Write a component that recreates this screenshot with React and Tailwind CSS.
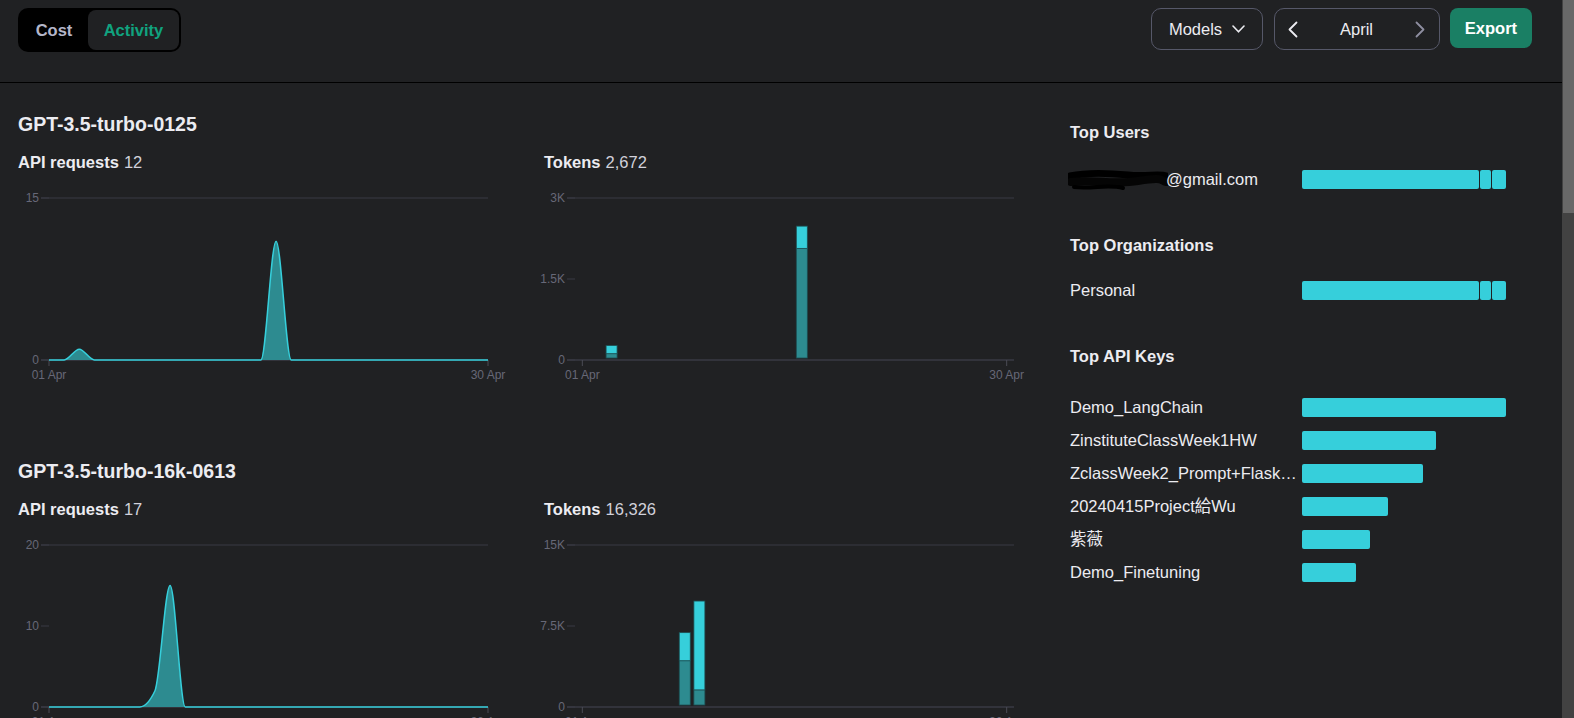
import React from 'react';

const PLOT_L = 31;
const PLOT_R = 470;
const TOP = 8;
const BASE = 170;
const DAYS = 30;

function monotonePath(p) {
  const n = p.length;
  const t = new Array(n).fill(0);
  for (let i = 1; i < n - 1; i++) {
    const h0 = p[i][0] - p[i - 1][0];
    const h1 = p[i + 1][0] - p[i][0];
    const s0 = (p[i][1] - p[i - 1][1]) / h0;
    const s1 = (p[i + 1][1] - p[i][1]) / h1;
    const pp = (s0 * h1 + s1 * h0) / (h0 + h1);
    t[i] = (Math.sign(s0) + Math.sign(s1)) * Math.min(Math.abs(s0), Math.abs(s1), 0.5 * Math.abs(pp)) || 0;
  }
  t[0] = (3 * (p[1][1] - p[0][1]) / (p[1][0] - p[0][0]) - t[1]) / 2;
  t[n - 1] = (3 * (p[n - 1][1] - p[n - 2][1]) / (p[n - 1][0] - p[n - 2][0]) - t[n - 2]) / 2;
  let d = `M${p[0][0]},${p[0][1]}`;
  for (let i = 0; i < n - 1; i++) {
    const dx = (p[i + 1][0] - p[i][0]) / 3;
    d += ` C${p[i][0] + dx},${p[i][1] + dx * t[i]} ${p[i + 1][0] - dx},${p[i + 1][1] - dx * t[i + 1]} ${p[i + 1][0]},${p[i + 1][1]}`;
  }
  return d;
}

function series(points) {
  const arr = new Array(DAYS).fill(0);
  Object.entries(points).forEach(([k, v]) => (arr[k] = v));
  return arr;
}

function Axes({ max, ticks, xTicks }) {
  const y = (v) => BASE - (v / max) * (BASE - TOP);
  return (
    <>
      <line x1={23} x2={PLOT_R} y1={TOP} y2={TOP} stroke="#393a44" strokeWidth="1" />
      <line x1={23} x2={PLOT_R} y1={BASE} y2={BASE} stroke="#393a44" strokeWidth="1.5" />
      {ticks.map((tk) => (
        <g key={tk.label}>
          <line x1={23} x2={31} y1={y(tk.v)} y2={y(tk.v)} stroke="#393a44" />
          <text x={21} y={y(tk.v) + 4} textAnchor="end" fontSize="12" fill="#676877">
            {tk.label}
          </text>
        </g>
      ))}
      {xTicks.map((x, i) => (
        <g key={i}>
          <line x1={x} x2={x} y1={BASE} y2={BASE + 6} stroke="#4a4b55" />
          <text x={x} y={189} textAnchor="middle" fontSize="12" fill="#676877">
            {i === 0 ? '01 Apr' : '30 Apr'}
          </text>
        </g>
      ))}
    </>
  );
}

function AreaChart({ max, ticks, data }) {
  const step = (PLOT_R - PLOT_L) / (DAYS - 1);
  const pts = data.map((v, i) => [PLOT_L + i * step, BASE - (v / max) * (BASE - TOP)]);
  const line = monotonePath(pts);
  const area = `${line} L${PLOT_R},${BASE} L${PLOT_L},${BASE} Z`;
  return (
    <svg width="496" height="200" className="block overflow-visible">
      <Axes max={max} ticks={ticks} xTicks={[PLOT_L, PLOT_R]} />
      <path d={area} fill="#2d8b90" />
      <path d={line} fill="none" stroke="#36cfdb" strokeWidth="1.5" />
    </svg>
  );
}

function BarChart({ max, ticks, bars }) {
  const band = (PLOT_R - PLOT_L) / DAYS;
  const cx = (i) => PLOT_L + band * (i + 0.5);
  const h = (v) => (v / max) * (BASE - TOP);
  return (
    <svg width="496" height="200" className="block overflow-visible">
      <Axes max={max} ticks={ticks} xTicks={[cx(0), cx(DAYS - 1)]} />
      {bars.map(([i, low, high]) => {
        const bottom = BASE - 2;
        const lowTop = bottom - h(low);
        const highTop = lowTop - h(high);
        return (
          <g key={i} stroke="#1d4f53" strokeWidth="0.8">
            <rect x={cx(i) - 5.5} y={lowTop} width="11" height={h(low)} fill="#2d8b90" />
            <rect x={cx(i) - 5.5} y={highTop} width="11" height={h(high)} fill="#36cfdb" />
          </g>
        );
      })}
    </svg>
  );
}

function Metric({ label, value }) {
  return (
    <div className="mt-[12px] h-6 text-[16.5px] leading-6">
      <span className="font-bold text-[#ececf1]">{label}</span>
      <span className="ml-[5px] text-[#d1d1db]">{value}</span>
    </div>
  );
}

function ModelSection({ title, requests, tokens, area, bar }) {
  return (
    <section>
      <h2 className="h-7 text-[19.5px] font-bold leading-7 text-[#ececf1]">{title}</h2>
      <div className="grid grid-cols-2 gap-x-[30px]">
        <div>
          <Metric label="API requests" value={requests} />
          <div className="mt-[16px]">
            <AreaChart {...area} />
          </div>
        </div>
        <div>
          <Metric label="Tokens" value={tokens} />
          <div className="mt-[16px]">
            <BarChart {...bar} />
          </div>
        </div>
      </div>
    </section>
  );
}

function SegBar() {
  return (
    <div className="flex h-[19px] w-[204px] gap-px">
      <div className="w-[177px] rounded-[2px] bg-[#36cfdb]" />
      <div className="w-[11px] rounded-[2px] bg-[#36cfdb]" />
      <div className="flex-1 rounded-[2px] bg-[#36cfdb]" />
    </div>
  );
}

function Redacted() {
  return (
    <svg width="100" height="22" className="-ml-[2px] block">
      <path d="M2 7 C20 3 40 4 60 6 S90 4 99 7" stroke="#000" strokeWidth="7" fill="none" strokeLinecap="round" />
      <path d="M3 13 C25 10 45 16 70 12 S92 11 98 13" stroke="#050505" strokeWidth="8" fill="none" strokeLinecap="round" />
      <path d="M6 18 C25 20 40 15 55 19" stroke="#000" strokeWidth="4" fill="none" strokeLinecap="round" />
    </svg>
  );
}

const apiKeys = [
  { name: 'Demo_LangChain', w: 204 },
  { name: 'ZinstituteClassWeek1HW', w: 134 },
  { name: 'ZclassWeek2_Prompt+Flask_Demo', w: 121 },
  { name: '20240415Project給Wu', w: 86 },
  { name: '紫薇', w: 68 },
  { name: 'Demo_Finetuning', w: 54 },
];

function ChevronDown() {
  return (
    <svg width="13" height="8" viewBox="0 0 13 8" fill="none">
      <path d="M1 1 L6.5 6.8 L12 1" stroke="#ececf1" strokeWidth="1.6" strokeLinecap="round" strokeLinejoin="round" />
    </svg>
  );
}

function ChevronSide({ dir, color }) {
  return (
    <svg width="10" height="17" viewBox="0 0 10 17" fill="none">
      <path
        d={dir === 'left' ? 'M8.5 1.5 L1.5 8.5 L8.5 15.5' : 'M1.5 1.5 L8.5 8.5 L1.5 15.5'}
        stroke={color}
        strokeWidth="1.8"
        strokeLinecap="round"
        strokeLinejoin="round"
      />
    </svg>
  );
}

export default function App() {
  return (
    <div className="flex h-screen w-full overflow-hidden bg-[#202123] font-['Liberation_Sans','Noto_Sans_CJK_TC',sans-serif] text-[#ececf1]">
      <div className="flex min-w-0 flex-1 flex-col">
        <header className="flex h-[83px] shrink-0 items-start justify-between border-b border-black pl-[18px] pr-[30px] pt-[8px]">
          <div className="flex h-[44px] rounded-[10px] bg-black p-[2px] text-[16.5px] font-bold">
            <button className="flex w-[68px] items-center justify-center text-[#b4b6c9]">Cost</button>
            <button className="flex w-[91px] items-center justify-center rounded-[8px] bg-[#202123] text-[#10a37f]">
              Activity
            </button>
          </div>
          <div className="flex items-start">
            <button className="flex h-[42px] w-[112px] items-center justify-center gap-[10px] rounded-[10px] border border-[#565869] text-[16.5px]">
              Models
              <ChevronDown />
            </button>
            <div className="ml-[11px] flex h-[42px] w-[166px] items-center justify-between rounded-[10px] border border-[#565869] pl-[13px] pr-[14px] text-[16.5px]">
              <ChevronSide dir="left" color="#ececf1" />
              <span className="pt-px">April</span>
              <ChevronSide dir="right" color="#8e8ea0" />
            </div>
            <button className="ml-[10px] flex h-10 w-[82px] items-center justify-center rounded-[8px] bg-[#1a7f64] pt-px text-[16.5px] font-bold text-white">
              Export
            </button>
          </div>
        </header>

        <div className="flex gap-[30px] pl-[18px] pr-[30px]">
          <div className="flex w-[1022px] shrink-0 flex-col gap-[67px] pt-[27px]">
            <ModelSection
              title="GPT-3.5-turbo-0125"
              requests="12"
              tokens="2,672"
              area={{
                max: 15,
                ticks: [{ v: 0, label: '0' }, { v: 15, label: '15' }],
                data: series({ 2: 1, 15: 11 }),
              }}
              bar={{
                max: 3000,
                ticks: [{ v: 0, label: '0' }, { v: 1500, label: '1.5K' }, { v: 3000, label: '3K' }],
                bars: [
                  [2, 80, 150],
                  [15, 2030, 412],
                ],
              }}
            />
            <ModelSection
              title="GPT-3.5-turbo-16k-0613"
              requests="17"
              tokens="16,326"
              area={{
                max: 20,
                ticks: [{ v: 0, label: '0' }, { v: 10, label: '10' }, { v: 20, label: '20' }],
                data: series({ 7: 2, 8: 15 }),
              }}
              bar={{
                max: 15000,
                ticks: [{ v: 0, label: '0' }, { v: 7500, label: '7.5K' }, { v: 15000, label: '15K' }],
                bars: [
                  [7, 4100, 2600],
                  [8, 1400, 8226],
                ],
              }}
            />
          </div>

          <aside className="min-w-0 flex-1 pt-[37px] text-[16.5px]">
            <h3 className="h-6 font-bold leading-6">Top Users</h3>
            <div className="mt-[19px] flex h-[33px] items-center">
              <div className="flex w-[232px] items-center">
                <Redacted />
                <span className="-ml-[2px]">@gmail.com</span>
              </div>
              <SegBar />
            </div>

            <h3 className="mt-[37px] h-6 font-bold leading-6">Top Organizations</h3>
            <div className="mt-[17px] flex h-[33px] items-center">
              <div className="w-[232px]">Personal</div>
              <SegBar />
            </div>

            <h3 className="mt-[37px] h-6 font-bold leading-6">Top API Keys</h3>
            <div className="mt-[23px] flex flex-col">
              {apiKeys.map((k) => (
                <div key={k.name} className="flex h-[33px] items-center">
                  <div className="w-[232px] truncate">{k.name}</div>
                  <div className="h-[19px] rounded-[2px] bg-[#36cfdb]" style={{ width: k.w }} />
                </div>
              ))}
            </div>
          </aside>
        </div>
      </div>
      <div className="w-[12px] shrink-0 bg-[#424242] pl-px">
        <div className="h-[213px] bg-[#686868]" />
      </div>
    </div>
  );
}
